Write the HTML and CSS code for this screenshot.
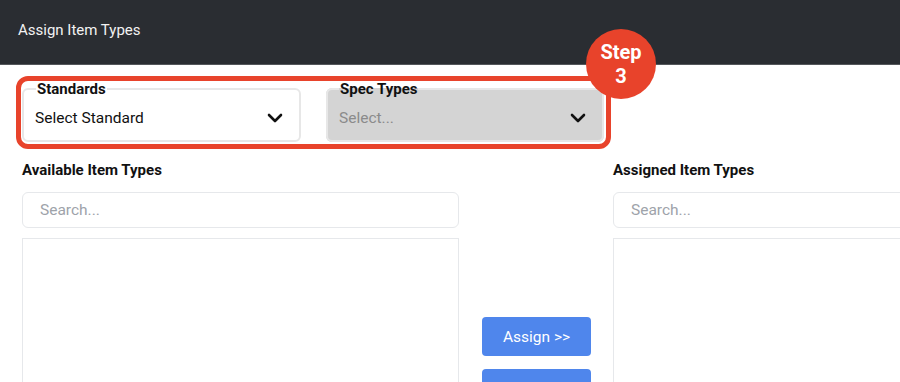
FILE: index.html
```html
<!DOCTYPE html>
<html lang="en">
<head>
    <meta charset="UTF-8">
    <meta name="viewport" content="width=device-width, initial-scale=1.0">
    <link rel="stylesheet" href="styles.css">
</head>
<body>
    <!-- top bar -->
    <header class="topbar">
        <h1>Assign Item Types</h1>
    </header>

    <main class="content">
        <!-- filters, highlighted as step 3 -->
        <div class="highlight">
            <fieldset class="select-box">
                <legend>Standards</legend>
                <div class="select-value">
                    <span>Select Standard</span>
                    <svg class="chevron" viewBox="0 0 16 10" width="16" height="10"><path d="M2 2l6 6 6-6"/></svg>
                </div>
            </fieldset>
            <fieldset class="select-box disabled">
                <legend>Spec Types</legend>
                <div class="select-value">
                    <span>Select...</span>
                    <svg class="chevron" viewBox="0 0 16 10" width="16" height="10"><path d="M2 2l6 6 6-6"/></svg>
                </div>
            </fieldset>
            <div class="step-badge">Step<br>3</div>
        </div>

        <!-- transfer lists -->
        <div class="transfer">
            <section class="list-col">
                <h2>Available Item Types</h2>
                <input class="search" type="text" placeholder="Search...">
                <div class="list-box"></div>
            </section>

            <div class="actions">
                <button class="btn">Assign &gt;&gt;</button>
                <button class="btn btn-remove">&lt;&lt; Remove</button>
            </div>

            <section class="list-col">
                <h2>Assigned Item Types</h2>
                <input class="search" type="text" placeholder="Search...">
                <div class="list-box"></div>
            </section>
        </div>
    </main>
</body>
</html>
```

FILE: styles.css
```css
/* base */
body {
    margin: 0;
    font-family: Roboto, "Liberation Sans", Arial, sans-serif;
    background-color: #fff;
    color: #111;
    overflow: hidden;
    height: 382px;
}

/* top bar */
.topbar {
    height: 64px;
    background-color: #2a2d32;
    border-bottom: 1px solid #54575b;
    display: flex;
    align-items: center;
    padding-left: 18px;
}

.topbar h1 {
    margin: 0 0 4px;
    font-size: 15px;
    font-weight: 400;
    color: #f2f2f2;
}

.content {
    padding: 11px 0 0 16px;
}

/* red step highlight */
.highlight {
    position: relative;
    width: 584px;
    display: flex;
    gap: 25px;
    padding: 1px 0 2px 1px;
    border: 5px solid #e8432b;
    border-radius: 12px;
}

.select-box {
    width: 279px;
    box-sizing: border-box;
    height: 60px;
    margin: 0;
    padding: 0 16px 0 11px;
    border: 2px solid #e7e7e7;
    border-radius: 6px;
    background-color: #fff;
}

.select-box legend {
    margin-left: 1px;
    padding: 0 1px;
    font-size: 15px;
    font-weight: 700;
    color: #111;
    line-height: 14px;
}

.select-box.disabled {
    width: 278px;
    background-color: #d4d4d4;
}

.select-box.disabled legend {
    margin-left: 0;
}

.select-value {
    display: flex;
    justify-content: space-between;
    align-items: center;
    height: 44px;
    font-size: 15.5px;
}

.disabled .select-value {
    color: #8b8b8b;
}

.chevron {
    fill: none;
    stroke: #111;
    stroke-width: 2.6;
    stroke-linecap: round;
    stroke-linejoin: round;
}

.step-badge {
    position: absolute;
    left: 565px;
    top: -52px;
    width: 70px;
    height: 70px;
    border-radius: 50%;
    background-color: #e8432b;
    color: #fff;
    font-size: 20px;
    font-weight: 700;
    line-height: 24px;
    text-align: center;
    display: flex;
    align-items: center;
    justify-content: center;
}

/* transfer lists */
.transfer {
    display: flex;
    margin-top: 13px;
    margin-left: 6px;
}

.list-col {
    width: 437px;
    flex-shrink: 0;
    display: flex;
    flex-direction: column;
}

.list-col h2 {
    margin: 0 0 14px;
    font-size: 15px;
    font-weight: 700;
    line-height: 16px;
}

.search {
    box-sizing: border-box;
    height: 36px;
    padding: 0 17px;
    border: 1px solid #e6e8eb;
    border-radius: 6px;
    font-family: inherit;
    font-size: 15.5px;
    outline: none;
}

.search::placeholder {
    color: #9ea3aa;
}

.list-box {
    height: 300px;
    margin-top: 10px;
    border: 1px solid #e6e8eb;
}

.actions {
    width: 154px;
    flex-shrink: 0;
    box-sizing: border-box;
    padding: 155px 22px 0 23px;
    display: flex;
    flex-direction: column;
    gap: 13px;
}

.btn {
    height: 39px;
    border: none;
    border-radius: 4px;
    background-color: #4f86ec;
    color: #fff;
    font-family: inherit;
    font-size: 15.5px;
    cursor: pointer;
}

/* label sits below the visible area, as in the screenshot */
.btn-remove {
    padding-top: 6px;
}
```
